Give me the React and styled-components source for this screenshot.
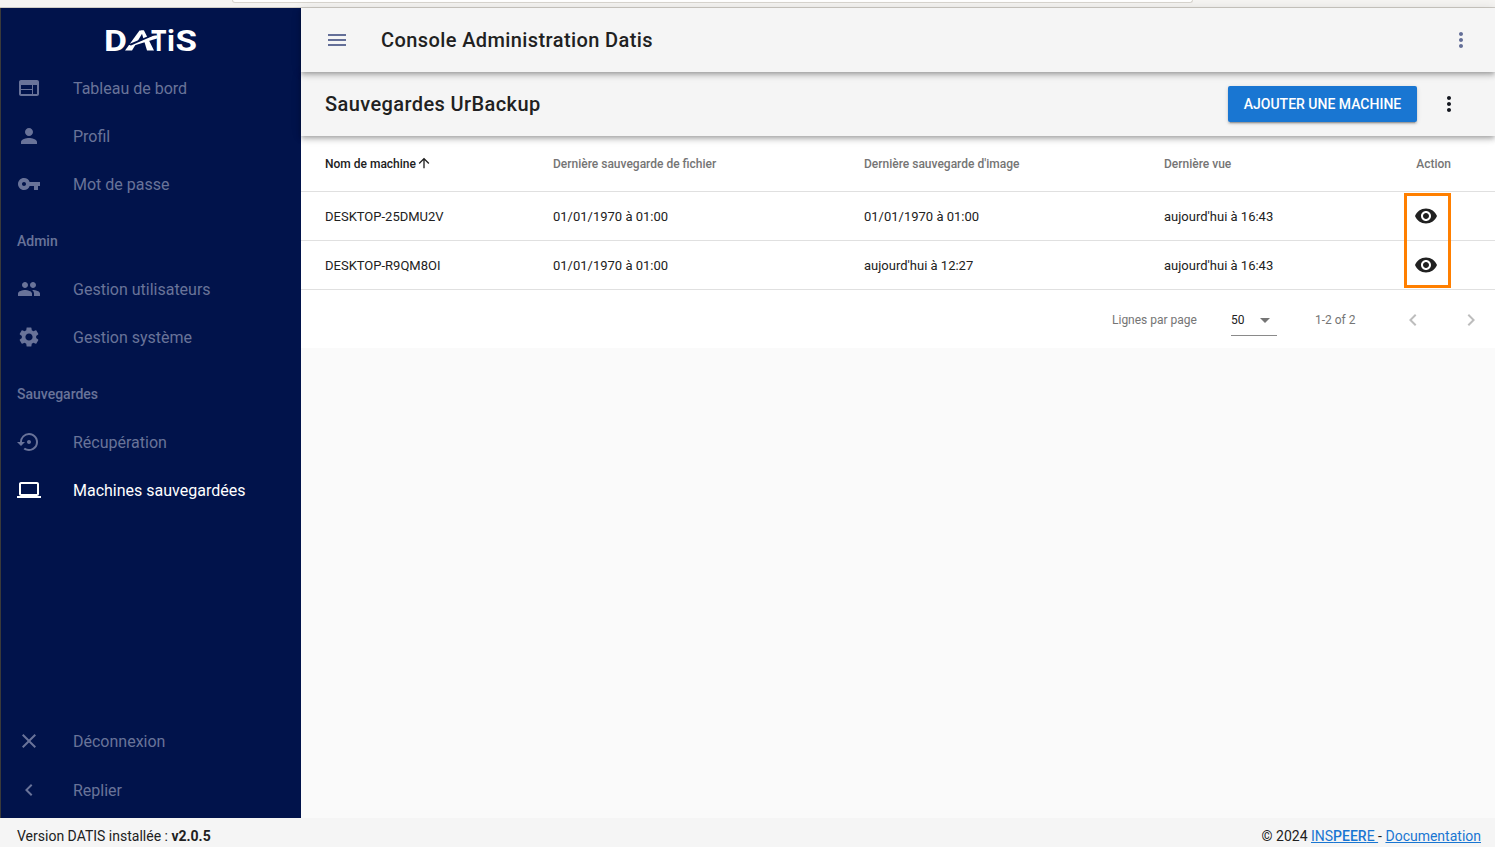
import React from 'react';
import styled, { createGlobalStyle } from 'styled-components';
import {
    MdWeb, MdPerson, MdVpnKey, MdPeople, MdSettings, MdSettingsBackupRestore, MdLaptop,
    MdClose, MdChevronLeft, MdChevronRight, MdMenu, MdMoreVert, MdVisibility, MdArrowUpward, MdArrowDropDown
} from 'react-icons/md';

const GlobalStyle = createGlobalStyle`
    html, body {
        margin: 0;
        padding: 0;
        height: 100%;
        overflow: hidden;
        font-family: Roboto, "Liberation Sans", sans-serif;
    }
`;

const Page = styled.div`
    height: 847px;
    display: flex;
    flex-direction: column;
    background-color: #fafafa;
`;

const BrowserEdge = styled.div`
    height: 7px;
    flex: none;
    padding-left: 232px;
    padding-right: 302px;
    background-color: #f5f4f2;
    border-bottom: 1px solid #cfccc6;
`;

const UrlBar = styled.div`
    height: 2px;
    background-color: #fff;
    border: 1px solid #d8d5cf;
    border-top: none;
    border-radius: 0 0 5px 5px;
`;

const Body = styled.div`
    flex: 1;
    min-height: 0;
    display: flex;
    border-left: 1px solid #3a3a3a;
`;

const Sidebar = styled.nav`
    width: 300px;
    flex: none;
    display: flex;
    flex-direction: column;
    padding-bottom: 4px;
    box-sizing: border-box;
    background-color: #01134b;
`;

const LogoRow = styled.div`
    height: 56px;
    flex: none;
    display: flex;
    justify-content: center;
    align-items: flex-start;
    padding-top: 12px;
    box-sizing: border-box;
`;

const MenuItem = styled.div`
    height: 48px;
    flex: none;
    display: flex;
    align-items: center;
    padding-left: 16px;
    font-size: 16px;
    color: ${props => props.$active ? '#fff' : '#697399'};
    svg {
        flex: none;
        font-size: 24px;
        margin-right: 32px;
        color: ${props => props.$active ? '#fff' : '#697399'};
    }
`;

const SectionLabel = styled.div`
    height: 48px;
    flex: none;
    display: flex;
    align-items: center;
    padding-left: 16px;
    margin-top: 9px;
    box-sizing: border-box;
    font-size: 14px;
    font-weight: 500;
    color: #697399;
`;

const Spacer = styled.div`
    flex: 1;
`;

const BottomMenu = styled.div`
    display: flex;
    flex-direction: column;
    gap: 1px;
`;

const Main = styled.main`
    flex: 1;
    min-width: 0;
    display: flex;
    flex-direction: column;
`;

const AppBar = styled.header`
    height: 64px;
    flex: none;
    position: relative;
    z-index: 2;
    display: flex;
    align-items: center;
    padding: 0 22px 0 24px;
    background-color: #f5f5f5;
    box-shadow: 0 2px 4px -1px rgba(0,0,0,.2), 0 4px 5px 0 rgba(0,0,0,.14), 0 1px 10px 0 rgba(0,0,0,.12);
    svg {
        font-size: 24px;
        color: #646f98;
    }
`;

const AppTitle = styled.h1`
    flex: 1;
    margin: 0 0 0 32px;
    font-size: 20px;
    font-weight: 500;
    letter-spacing: .4px;
    color: #212121;
`;

const SubBar = styled.section`
    height: 64px;
    flex: none;
    position: relative;
    z-index: 1;
    display: flex;
    align-items: center;
    padding: 0 34px 0 24px;
    background-color: #f5f5f5;
    box-shadow: 0 2px 4px -1px rgba(0,0,0,.2), 0 4px 5px 0 rgba(0,0,0,.14), 0 1px 10px 0 rgba(0,0,0,.12);
    > svg {
        font-size: 24px;
        color: #14171f;
        margin-left: 20px;
    }
`;

const PageTitle = styled.h2`
    flex: 1;
    margin: 0;
    font-size: 20px;
    font-weight: 500;
    letter-spacing: .4px;
    color: #212121;
`;

const AddButton = styled.button`
    height: 36px;
    width: 189px;
    padding: 0;
    border: none;
    border-radius: 2px;
    font-family: inherit;
    font-size: 14px;
    font-weight: 500;
    text-transform: uppercase;
    color: #fff;
    background-color: #1976d2;
    box-shadow: 0 3px 1px -2px rgba(0,0,0,.2), 0 2px 2px 0 rgba(0,0,0,.14), 0 1px 5px 0 rgba(0,0,0,.12);
`;

const TablePanel = styled.div`
    flex: none;
    position: relative;
    background-color: #fff;
`;

const Table = styled.table`
    width: 100%;
    table-layout: fixed;
    border-collapse: collapse;
`;

const HeadCell = styled.th`
    height: 55px;
    padding: ${props => props.$first ? 0 : 2}px ${props => props.$right ? 44 : 0}px 0 ${props => props.$first ? 24 : 0}px;
    width: ${props => props.$width};
    box-sizing: border-box;
    font-size: 12px;
    font-weight: 500;
    text-align: ${props => props.$right ? 'right' : 'left'};
    color: ${props => props.$sorted ? '#212121' : '#757575'};
    border-bottom: 1px solid #e0e0e0;
    svg {
        font-size: 16px;
        vertical-align: -3.5px;
    }
`;

const Cell = styled.td`
    height: 49px;
    box-sizing: border-box;
    padding: 1px 0 0 ${props => props.$first ? 24 : 0}px;
    font-size: 13px;
    color: #212121;
    border-bottom: 1px solid #e0e0e0;
`;

const ActionCell = styled(Cell)`
    padding: 0 0 0 10px;
    line-height: 0;
    svg {
        font-size: 24px;
        color: #212121;
    }
`;

const Highlight = styled.div`
    position: absolute;
    left: 1103px;
    top: 57px;
    width: 47px;
    height: 95px;
    box-sizing: border-box;
    border: 3px solid #ff7f00;
    pointer-events: none;
`;

const Pagination = styled.div`
    height: 58px;
    padding: 3px 0 0 811px;
    box-sizing: border-box;
    display: flex;
    align-items: center;
    font-size: 12px;
    color: #757575;
`;

const PerPage = styled.div`
    width: 46px;
    height: 32px;
    margin: 0 38px 0 34px;
    box-sizing: border-box;
    padding-top: 1px;
    display: flex;
    align-items: center;
    justify-content: space-between;
    color: #212121;
    border-bottom: 1px solid #8a8a8a;
    svg {
        font-size: 24px;
        color: #757575;
    }
`;

const PageInfo = styled.span`
    width: 40px;
    margin-right: 46px;
    white-space: nowrap;
`;

const PageArrows = styled.div`
    display: flex;
    gap: 34px;
    svg {
        font-size: 24px;
        color: #bdbdbd;
    }
`;

const Footer = styled.footer`
    height: 29px;
    flex: none;
    display: flex;
    align-items: center;
    justify-content: space-between;
    padding: 6px 14px 0 17px;
    box-sizing: border-box;
    font-size: 14px;
    color: #212121;
    background-color: #f5f5f5;
    b {
        font-weight: 700;
    }
    a {
        color: #1976d2;
    }
    a b {
        font-weight: 500;
    }
`;

// logo: real letters, only the swoosh A is drawn
const Logo = () => (
    <svg width="100" height="40" viewBox="0 0 100 40">
        <g fill="#fff" fontFamily="Roboto, sans-serif" fontWeight="700" fontSize="30">
            <text x="3" y="30.5" textLength="23" lengthAdjust="spacingAndGlyphs">D</text>
            <text x="50" y="30.5" textLength="15.5" lengthAdjust="spacingAndGlyphs">T</text>
            <text x="66" y="30.5">i</text>
            <text x="74.5" y="30.5" textLength="21.5" lengthAdjust="spacingAndGlyphs">S</text>
        </g>
        <polygon fill="#fff" points="24,30.5 31,30.5 43,10.5 38.5,10.5" />
        <polygon fill="#fff" points="40,10.5 43,10.5 53,30.5 46,30.5" />
        <polygon fill="#fff" points="28,25.5 52,15.5 56,15.5 56,18.5 33,25.5" />
        <polygon fill="#01134b" points="27,24.5 50,15 54,15 30,25.5" />
    </svg>
);

const mainItems = [
    { label: 'Tableau de bord', Icon: MdWeb },
    { label: 'Profil', Icon: MdPerson },
    { label: 'Mot de passe', Icon: MdVpnKey }
];
const adminItems = [
    { label: 'Gestion utilisateurs', Icon: MdPeople },
    { label: 'Gestion système', Icon: MdSettings }
];
const backupItems = [
    { label: 'Récupération', Icon: MdSettingsBackupRestore },
    { label: 'Machines sauvegardées', Icon: MdLaptop, active: true }
];
const bottomItems = [
    { label: 'Déconnexion', Icon: MdClose },
    { label: 'Replier', Icon: MdChevronLeft }
];

const machines = [
    { name: 'DESKTOP-25DMU2V', file: '01/01/1970 à 01:00', image: '01/01/1970 à 01:00', seen: "aujourd'hui à 16:43" },
    { name: 'DESKTOP-R9QM8OI', file: '01/01/1970 à 01:00', image: "aujourd'hui à 12:27", seen: "aujourd'hui à 16:43" }
];

const renderItems = items => items.map(({ label, Icon, active }) => (
    <MenuItem key={label} $active={active}>
        <Icon />
        {label}
    </MenuItem>
));

const App = () => {
    return (
        <Page>
            <GlobalStyle />
            <BrowserEdge><UrlBar /></BrowserEdge>
            <Body>
                <Sidebar>
                    <LogoRow><Logo /></LogoRow>
                    {renderItems(mainItems)}
                    <SectionLabel>Admin</SectionLabel>
                    {renderItems(adminItems)}
                    <SectionLabel>Sauvegardes</SectionLabel>
                    {renderItems(backupItems)}
                    <Spacer />
                    <BottomMenu>{renderItems(bottomItems)}</BottomMenu>
                </Sidebar>
                <Main>
                    <AppBar>
                        <MdMenu />
                        <AppTitle>Console Administration Datis</AppTitle>
                        <MdMoreVert />
                    </AppBar>
                    <SubBar>
                        <PageTitle>Sauvegardes UrBackup</PageTitle>
                        <AddButton>Ajouter une machine</AddButton>
                        <MdMoreVert />
                    </SubBar>
                    <TablePanel>
                        <Table>
                            <thead>
                                <tr>
                                    <HeadCell $first $sorted $width="252px">Nom de machine<MdArrowUpward /></HeadCell>
                                    <HeadCell $width="311px">Dernière sauvegarde de fichier</HeadCell>
                                    <HeadCell $width="300px">Dernière sauvegarde d'image</HeadCell>
                                    <HeadCell $width="240px">Dernière vue</HeadCell>
                                    <HeadCell $right>Action</HeadCell>
                                </tr>
                            </thead>
                            <tbody>
                                {machines.map(machine => (
                                    <tr key={machine.name}>
                                        <Cell $first>{machine.name}</Cell>
                                        <Cell>{machine.file}</Cell>
                                        <Cell>{machine.image}</Cell>
                                        <Cell>{machine.seen}</Cell>
                                        <ActionCell><MdVisibility /></ActionCell>
                                    </tr>
                                ))}
                            </tbody>
                        </Table>
                        <Highlight />
                        <Pagination>
                            <span>Lignes par page</span>
                            <PerPage>50<MdArrowDropDown /></PerPage>
                            <PageInfo>1-2 of 2</PageInfo>
                            <PageArrows>
                                <MdChevronLeft />
                                <MdChevronRight />
                            </PageArrows>
                        </Pagination>
                    </TablePanel>
                </Main>
            </Body>
            <Footer>
                <span>Version DATIS installée : <b>v2.0.5</b></span>
                <span>© 2024 <a href="#inspeere">INS<b>PEER</b>E </a> - <a href="#doc">Documentation</a></span>
            </Footer>
        </Page>
    );
};

export default App;
